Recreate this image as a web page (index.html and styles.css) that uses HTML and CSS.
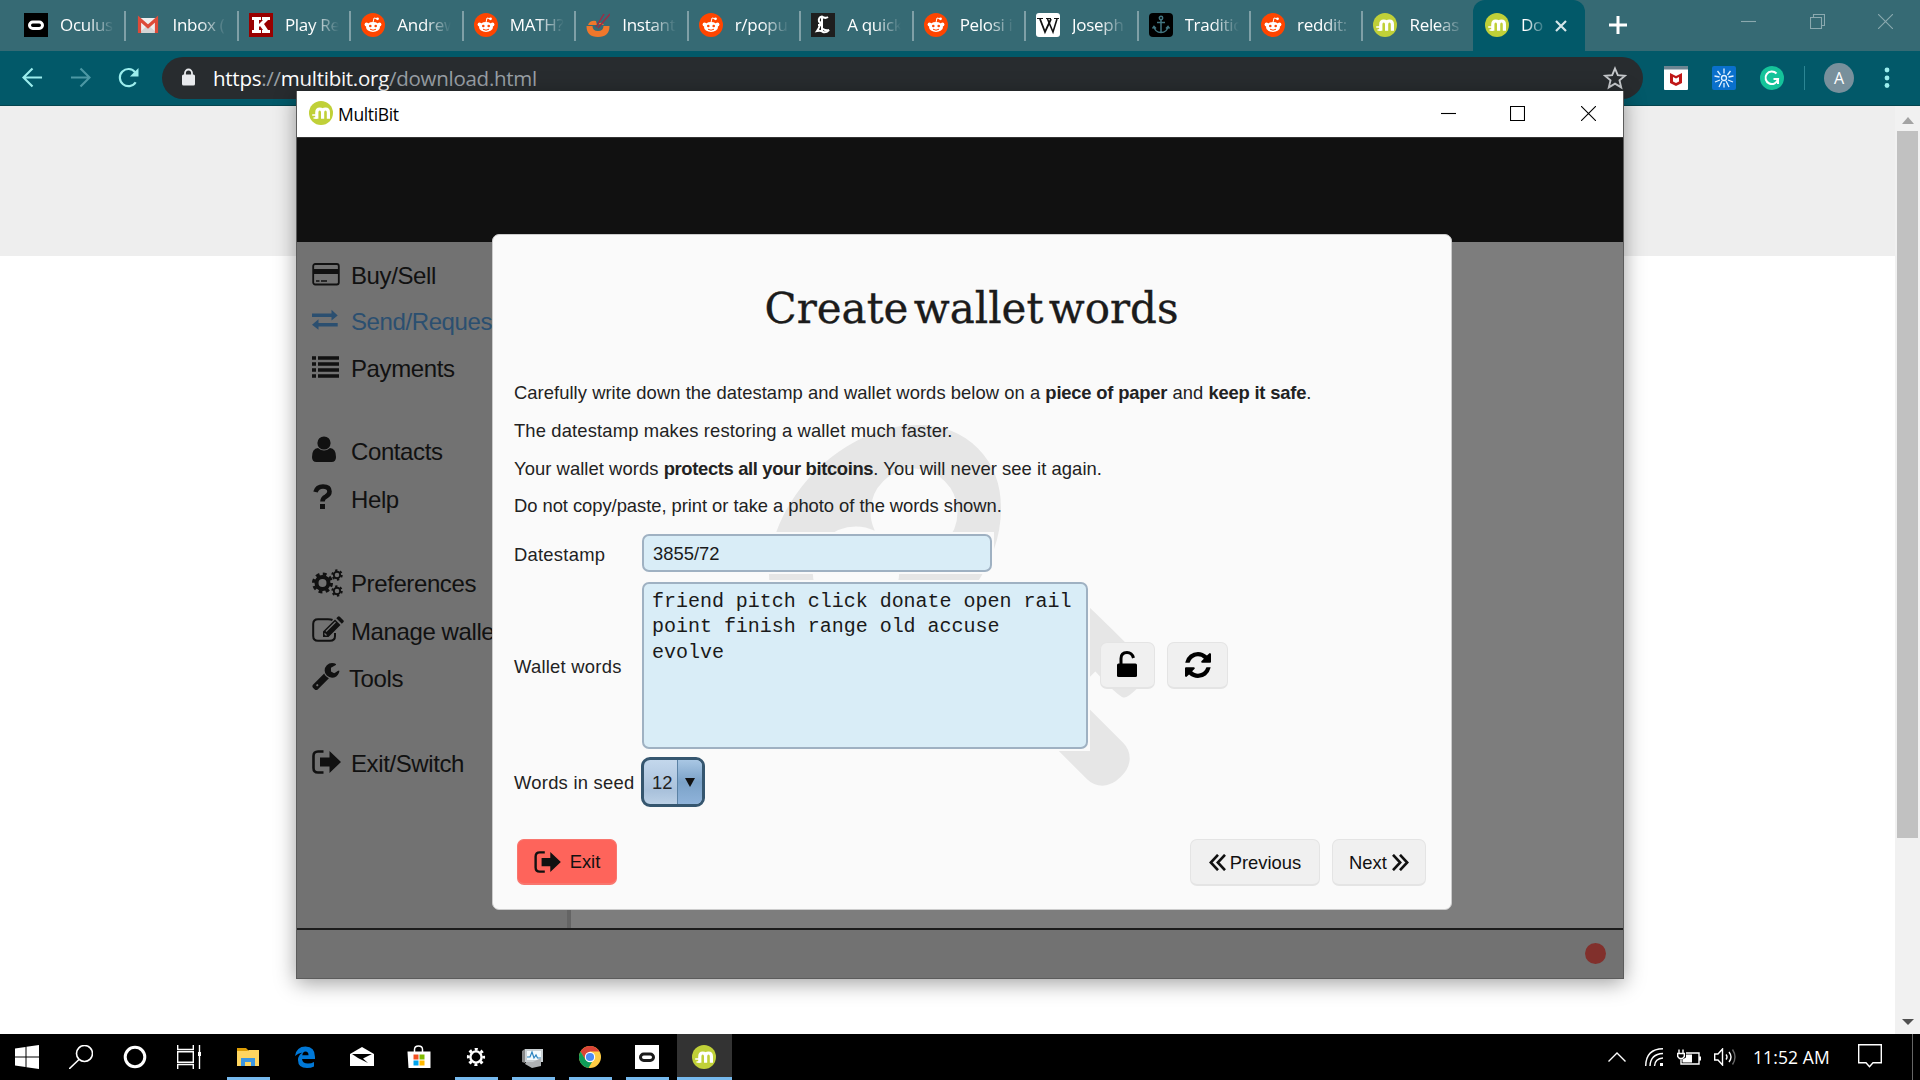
FILE: index.html
```html
<!DOCTYPE html>
<html lang="en">
<head>
<meta charset="utf-8">
<title>MultiBit</title>
<link rel="stylesheet" href="styles.css">
</head>
<body>
<svg class="defs" width="0" height="0">
  <symbol id="reddit" viewBox="0 0 24 24"><circle cx="12" cy="12" r="12" fill="#ff4500"/><g fill="#fff"><ellipse cx="12" cy="14" rx="7" ry="5"/><circle cx="5.500" cy="11.500" r="1.900"/><circle cx="18.500" cy="11.500" r="1.900"/><circle cx="16.500" cy="5.800" r="1.400"/></g><path d="M12 9.500l1-4.500 3.500.8" fill="none" stroke="#fff" stroke-width="1"/><circle cx="9.300" cy="13" r="1.300" fill="#ff4500"/><circle cx="14.700" cy="13" r="1.300" fill="#ff4500"/><path d="M9 16.200q3 2 6 0" fill="none" stroke="#ff4500"/></symbol>
  <symbol id="multibit" viewBox="0 0 24 24"><circle cx="12" cy="12" r="12" fill="#c0d038"/><path d="M7.800 17.800v-6.300Q7.800 8 10.700 8t2.900 3.500v6.300M13.600 11.500Q13.600 8 16.500 8t2.900 3.500v6.300" fill="none" stroke="#fff" stroke-width="3.200"/><path d="M3.200 14h4M4.500 17H8" stroke="#fff" stroke-width="1.700"/></symbol>
  <symbol id="signout" viewBox="0 0 30 24"><path d="M11.500 1.500H6Q1.500 1.500 1.500 6v12q0 4.500 4.500 4.500h5.500" fill="none" stroke="currentColor" stroke-width="2.600"/><path d="M8 7.500h9.500V1L29 12 17.500 23v-6.500H8z" fill="currentColor"/></symbol>
  <symbol id="oculus" viewBox="0 0 24 24"><rect x="5.500" y="9" width="13" height="6.500" rx="3.250" fill="none" stroke="currentColor" stroke-width="3"/></symbol>
</svg>
<div class="desktop">
  <header class="tabstrip">
    <div class="tab"><svg class="fav black" viewBox="0 0 24 24"><use href="#oculus"/></svg><span>Oculus</span></div>
    <div class="tab"><svg class="fav" viewBox="0 0 24 24"><path d="M3 5h18v15H3z" fill="#eee"/><path d="M3 20l9-8 9 8z" fill="#d5d5d5"/><path d="M3.500 20V6L12 13.500 20.500 6v14" fill="none" stroke="#dd4b39" stroke-width="3.200"/></svg><span>Inbox (</span></div>
    <div class="tab"><svg class="fav" viewBox="0 0 24 24"><rect width="24" height="24" fill="#900"/><path d="M3 4h9v3h-2v4l4-4h-1V4h8v3h-2l-4 4 4 6h2v3h-8v-3h1l-3-4-1 1v3h2v3H3v-3h2V7H3z" fill="#fff"/></svg><span>Play Re</span></div>
    <div class="tab"><svg class="fav"><use href="#reddit"/></svg><span>Andrew</span></div>
    <div class="tab"><svg class="fav"><use href="#reddit"/></svg><span>MATH?</span></div>
    <div class="tab"><svg class="fav" viewBox="0 0 24 24"><path d="M.5 13h6q0 5 5.500 5t5.500-5h6q0 11-11.500 11T.5 13z" fill="#f0772b"/><path d="M2 12q2-5 8-4l1 4zM12 11q4-3 6 1z" fill="#f0772b"/><path d="M10 14L18 1M12 15l12-14" stroke="#a02a43" stroke-width="1.400"/></svg><span>Instant</span></div>
    <div class="tab"><svg class="fav"><use href="#reddit"/></svg><span>r/popu</span></div>
    <div class="tab"><svg class="fav" viewBox="0 0 24 24"><rect width="24" height="24" fill="#1e1e1e"/><path d="M17 4q-3 2-6-.5-4 1-3 5 2 1 1 3.500-1 3-3 6 4-1 6 1 3 1 6-2-3 1-6-1l-1-1M11 4v14M7 12h4" fill="none" stroke="#fff" stroke-width="2"/></svg><span>A quick</span></div>
    <div class="tab"><svg class="fav"><use href="#reddit"/></svg><span>Pelosi i</span></div>
    <div class="tab"><svg class="fav" viewBox="0 0 24 24"><rect width="24" height="24" rx="3" fill="#fff"/><path d="M1 5.500h6M10 5.500h5M18 5.500h5" stroke="#111"/><path d="M4 6l5 13L15 6M12 6" stroke="#111" stroke-width="1.800" fill="none"/><path d="M11.500 6L17 19l4-13" stroke="#111" stroke-width="1.600" fill="none"/></svg><span>Joseph</span></div>
    <div class="tab"><svg class="fav" viewBox="0 0 24 24"><rect width="24" height="24" rx="4" fill="#000"/><g fill="none" stroke="#427681" stroke-width="1.500"><circle cx="12" cy="5" r="1.700"/><path d="M12 7v13M8 9.500h8M5 13.500q1 6 7 6t7-6M3.500 15.500l1.500-2 2 2M17 15.500l2-2 1.500 2"/></g></svg><span>Traditio</span></div>
    <div class="tab"><svg class="fav"><use href="#reddit"/></svg><span>reddit:</span></div>
    <div class="tab last"><svg class="fav"><use href="#multibit"/></svg><span>Releas</span></div>
    <div class="tab active"><svg class="fav"><use href="#multibit"/></svg><span>Do</span><svg class="x" viewBox="0 0 12 12"><path d="M1 1l10 10M11 1L1 11" stroke="#d5e6e9" stroke-width="2.200"/></svg></div>
    <svg class="plus" viewBox="0 0 18 18"><path d="M9 0v18M0 9h18" stroke="#fff" stroke-width="3"/></svg>
    <div class="winctl dim">
      <svg viewBox="0 0 15 15"><path d="M0 7.500h15"/></svg>
      <svg viewBox="0 0 15 15"><path d="M.5 3.500h11v11H.5zM3.500 3V.5h11v11H12"/></svg>
      <svg viewBox="0 0 15 15"><path d="M0 0l15 15M15 0L0 15"/></svg>
    </div>
  </header>
  <nav class="toolbar">
    <svg class="nav" viewBox="0 0 22 22"><path d="M21 11H2M11 1.500L1.500 11l9.500 9.500"/></svg>
    <svg class="nav off" viewBox="0 0 22 22"><path d="M1 11h19M11 1.500l9.500 9.500-9.500 9.500"/></svg>
    <svg class="nav" viewBox="0 0 22 22"><path d="M18.500 16A9 9 0 1 1 18 5.500"/><path d="M21.500 1v9h-9z" fill="#9ceded" stroke="none"/></svg>
    <div class="omnibox">
      <svg class="lock" viewBox="0 0 13 17"><path d="M3 7V4.500a3.500 3.500 0 0 1 7 0V7" fill="none" stroke="#e8eaed" stroke-width="1.800"/><rect y="6" width="13" height="11" rx="1.500" fill="#e8eaed"/></svg>
      <span class="url">https<i>://</i>multibit.org<i>/download.html</i></span>
      <svg class="star" viewBox="0 0 24 24"><path d="M12 2.500l2.800 6.600 7.200.6-5.500 4.700 1.700 7L12 17.600l-6.200 3.800 1.700-7L2 9.700l7.200-.6z"/></svg>
    </div>
    <div class="exts">
      <svg viewBox="0 0 24 24"><rect width="24" height="24" rx="1" fill="#fff"/><path d="M0 0h24v3.500H0z" fill="#6c8592"/><path d="M6 7l6 3 6-3v10l-6 3-6-3z" fill="#c01818"/><path d="M9 11l3 1.500 3-1.500v4.500L12 17l-3-1.500z" fill="#fff"/></svg>
      <svg viewBox="0 0 24 24"><rect width="24" height="24" rx="2" fill="#0a70cc"/><g fill="none" stroke="#e4f2ff" stroke-width="1.300"><circle cx="12" cy="12" r="2.500"/><path d="M12 2.500v5M5.500 5l3 4M18.500 5l-3 4M2.500 10l5 1M21.500 10l-5 1M3 16l5-2M21 16l-5-2M7 21l3-6M17 21l-3-6M12 17v4.500"/></g></svg>
      <svg viewBox="0 0 24 24"><circle cx="12" cy="12" r="12" fill="#15c39a"/><path d="M16.500 7.500A6.300 6.300 0 1 0 18 13h-4.500M18 12.500v5.500" fill="none" stroke="#fff" stroke-width="2"/></svg>
    </div>
    <div class="avatar">A</div>
    <svg class="dots" viewBox="0 0 6 24"><g fill="#9ceded"><circle cx="3" cy="4" r="2.400"/><circle cx="3" cy="12" r="2.400"/><circle cx="3" cy="19.500" r="2.400"/></g></svg>
  </nav>
  <main class="page">
    <div class="page-body"><div class="banner"></div></div>
    <div class="scroll">
      <svg viewBox="0 0 12 8"><path d="M0 8l6-7 6 7z" fill="#a3a3a3"/></svg>
      <div class="thumb"></div>
      <svg viewBox="0 0 12 8"><path d="M0 1l6 6 6-6z" fill="#505050"/></svg>
    </div>
  </main>
  <footer class="taskbar">
    <div class="sys">
      <svg viewBox="0 0 24 24"><path d="M0 3.500l10.500-1.500v9.500H0zM11.500 1.800L24 0v11.500H11.500zM0 12.500h10.500V22L0 20.500zM11.500 12.500H24V24l-12.500-1.800z" fill="#fff"/></svg>
      <svg viewBox="0 0 24 24"><g fill="none" stroke="#fff" stroke-width="1.600"><circle cx="15.500" cy="8.500" r="8"/><path d="M10 14.500L0 24"/></g></svg>
      <svg viewBox="0 0 24 24"><circle cx="12" cy="12" r="9.800" fill="none" stroke="#fff" stroke-width="3"/></svg>
      <svg viewBox="0 0 24 24"><path d="M.7 0v4.500h15.600V0M.7 6.700h15.600v10.600H.7zM.7 24v-4.500h15.600V24M22.500 0v24" fill="none" stroke="#fff" stroke-width="1.400"/><path d="M21 7h3v4h-3z" fill="#fff"/></svg>
    </div>
    <div class="apps">
      <div class="app run"><svg viewBox="0 0 24 24"><path d="M1 3h9l2 2v2H1z" fill="#dd9d05"/><path d="M1 6h10l2-1h10v16H1z" fill="#ffd55f"/><path d="M5 21v-8h14v8h-4v-4H9v4z" fill="#3c96e0"/></svg></div>
      <div class="app"><svg viewBox="0 0 24 24"><path d="M2 11Q3.500 1.500 12.500 1.500 22 1.500 22 12v2H9q.5 4.500 6 4.500 3.500 0 6-1.500v4.500q-3 1.500-7 1.500-9 0-9-8 0-5 4.500-7.500Q5 8 2 11zm7.300-.8h6.200q0-3.700-3-3.700-2.700 0-3.200 3.700z" fill="#0078d7"/></svg></div>
      <div class="app"><svg viewBox="0 0 24 24"><path d="M0 9l12-7 12 7v12H0z" fill="#fff"/><path d="M2 9h20l-9 4.500 5 4.500L8 13z" fill="#000"/></svg></div>
      <div class="app"><svg viewBox="0 0 24 24"><path d="M7.500 7V4.500q0-3.500 4-3.500t4 3.500V7" fill="none" stroke="#fff" stroke-width="1.500"/><path d="M.5 6.500h23V23H1.500z" fill="#fff"/><path d="M6.500 9.500h5v5h-5z" fill="#f25022"/><path d="M12.500 9.500h5v5h-5z" fill="#7fba00"/><path d="M6.500 15.500h5v5h-5z" fill="#00a4ef"/><path d="M12.500 15.500h5v5h-5z" fill="#ffb900"/></svg></div>
      <div class="app run"><svg viewBox="0 0 24 24"><circle cx="12" cy="12" r="5.600" fill="none" stroke="#fff" stroke-width="2.400"/><circle cx="12" cy="12" r="7.700" fill="none" stroke="#fff" stroke-width="2.800" stroke-dasharray="3 3.047" stroke-dashoffset="1.500"/></svg></div>
      <div class="app run"><svg viewBox="0 0 24 24"><path d="M1 6l3-2v14l-3-1z" fill="#888"/><path d="M4 4h18v13H4z" fill="#c9cfd2"/><path d="M6 6h14v9H6z" fill="#f4fafc"/><path d="M6 12h3l2-5 2 6 2-3 1.500 3H20" fill="none" stroke="#2a83c0" stroke-width="1.200"/><path d="M9 17h3l8-4v8l-9 2-7-4 1-2z" fill="#aeb1b3"/></svg></div>
      <div class="app run"><svg viewBox="0 0 24 24"><circle cx="12" cy="12" r="11" fill="#fc4"/><path d="M2.500 6.500A11 11 0 0 1 21.500 6.500H12L7 14.500z" fill="#db4437"/><path d="M2.500 6.500l5 8.200 6.500 2.200L10.500 23A11 11 0 0 1 2.500 6.500z" fill="#0f9d58"/><circle cx="12" cy="12" r="5.200" fill="#fff"/><circle cx="12" cy="12" r="4.100" fill="#4c8bf5"/></svg></div>
      <div class="app run"><svg class="white" viewBox="0 0 24 24"><use href="#oculus"/></svg></div>
      <div class="app run current"><svg><use href="#multibit"/></svg></div>
    </div>
    <div class="tray">
      <svg class="t1" viewBox="0 0 18 10"><path d="M.5 9.500L9 1l8.500 8.500"/></svg>
      <svg class="t2" viewBox="0 0 18 18"><path d="M.7 18Q1 1 18 .8M5 18Q5.500 6 18 5.500M9.500 18Q10 10.500 18 10"/><path d="M15 15h3v3h-3z" fill="#fff" stroke="none"/></svg>
      <svg class="t3" viewBox="0 0 24 16"><path d="M9 3.500h13v11H4V10M2 0v4M6 0v4M.7 4h6.600v3L5.500 9h-3L.7 7z"/><path d="M22 7h2v4h-2zM9 5h6v8H5.500v-3L9 8z" fill="#fff" stroke="none"/></svg>
      <svg class="t4" viewBox="0 0 22 18"><path d="M.7 6v6H4l4.500 5V1L4 6zM12 6.500q2 2.500 0 5M15 4q4 5 0 10"/><path d="M18.500 1.500q5 7.500 0 15" opacity=".4"/></svg>
      <span class="clock">11:52 AM</span>
      <svg class="t5" viewBox="0 0 24 24"><path d="M.7.700h22.600v18H15l-3.500 4-3.500-4H.7z"/></svg>
      <div class="peek"></div>
    </div>
  </footer>

  <section class="window">
    <div class="titlebar">
      <svg class="fav"><use href="#multibit"/></svg><span>MultiBit</span>
      <div class="winctl">
        <svg viewBox="0 0 15 15"><path d="M0 7.500h15"/></svg>
        <svg viewBox="0 0 15 15"><path d="M.5.500h14v14H.5z"/></svg>
        <svg viewBox="0 0 15 15"><path d="M0 0l15 15M15 0L0 15"/></svg>
      </div>
    </div>
    <div class="band"></div>
    <div class="middle">
      <aside class="side">
        <ul class="g1">
          <li><svg viewBox="0 0 30 30"><rect x="1.200" y="4" width="25.600" height="20.500" rx="2" fill="none" stroke="currentColor" stroke-width="1.800"/><path d="M1 9h26v5H1z" fill="currentColor"/><path d="M4 21h3.500M9 21h6" stroke="currentColor" stroke-width="1.600"/></svg>Buy/Sell</li>
          <li class="sel"><svg viewBox="0 0 30 30"><path d="M0 7.500h19.500V3.800l6.200 5.600-6.200 5.200v-3.500H0zM25.700 17H6.500v-3.700L0 18.700l6.500 5V20.600h19.200z" fill="currentColor"/></svg>Send/Request</li>
          <li><svg viewBox="0 0 30 30"><path d="M0 5h4M6 5h21M0 11h4M6 11h21M0 17h4M6 17h21M0 23h4M6 23h21" stroke="currentColor" stroke-width="3.600"/></svg>Payments</li>
        </ul>
        <ul class="g2">
          <li><svg viewBox="0 0 30 30"><circle cx="12" cy="8" r="6.600" fill="currentColor"/><path d="M6 13q6 5 12 0 6 .5 6 9 0 5-4.500 5h-15Q0 27 0 22q0-8.500 6-9z" fill="currentColor"/></svg>Contacts</li>
          <li><svg viewBox="0 0 30 30"><path d="M3.500 9Q5 3.500 11 3.500q6.500 0 6.500 5 0 3-3.500 5-3.500 1.800-3.500 5" fill="none" stroke="currentColor" stroke-width="4.600"/><path d="M8 21h5v5H8z" fill="currentColor"/></svg>Help</li>
        </ul>
        <ul class="g3">
          <li><svg class="wide" viewBox="0 0 32 30"><g fill="none" stroke="currentColor"><circle cx="10.500" cy="15" r="6" stroke-width="4"/><circle cx="10.500" cy="15" r="9" stroke-width="3" stroke-dasharray="3.800 3.270"/><circle cx="25" cy="7" r="3.200" stroke-width="1.900"/><circle cx="25" cy="7" r="4.700" stroke-width="2" stroke-dasharray="2.300 2.620"/><circle cx="25" cy="23" r="3.200" stroke-width="1.900"/><circle cx="25" cy="23" r="4.700" stroke-width="2" stroke-dasharray="2.300 2.620"/></g></svg>Preferences</li>
          <li><svg class="wide" viewBox="0 0 32 30"><path d="M20.500 4Q19 3.200 16 3.200H6Q1.200 3.200 1.200 8v12q0 4.800 4.800 4.800h12q5 0 5-4.800v-3" fill="none" stroke="currentColor" stroke-width="2"/><path d="M11 21v-5.500L23 3.500l5.500 5.500-12 12zM24.300 2.200l1.500-1.500q1-1 2 0l3.500 3.500q1 1 0 2L29.800 7.700z" fill="currentColor"/><path d="M14 15.500L23.500 6M12.500 17.500l2 2" stroke="#727272" stroke-width="1.200"/></svg>Manage wallet</li>
          <li class="tools"><svg viewBox="64 128 1700 1700"><path fill="currentColor" d="M448 1472q0-26-19-45t-45-19-45 19-19 45 19 45 45 19 45-19 19-45zm644-420l-682 682q-37 37-90 37-52 0-91-37l-106-108q-38-36-38-90 0-53 38-91l681-681q39 98 114.500 173.500t173.500 114.500zm634-435q0 39-23 106-47 134-164.500 217.500t-258.500 83.500q-185 0-316.500-131.500t-131.500-316.500 131.500-316.500 316.500-131.500q58 0 121.500 16.500t107.500 46.500q16 11 16 28t-16 28l-293 169v224l193 107q5-3 79-48.500t135.500-81 70.500-35.500q15 0 23.500 10t8.500 25z"/></svg>Tools</li>
        </ul>
        <ul class="g4">
          <li><svg class="so"><use href="#signout"/></svg>Exit/Switch</li>
        </ul>
      </aside>
      <div class="detail"></div>
    </div>
    <div class="status"><i></i></div>

    <div class="dialog">
      <svg class="key" viewBox="0 0 1792 1792"><path fill="#e6e6e6" d="M832 512q0-80-56-136t-136-56-136 56-56 136q0 42 19 83-41-19-83-19-80 0-136 56t-56 136 56 136 136 56 136-56 56-136q0-42-19-83 41 19 83 19 80 0 136-56t56-136zm851 704q0 17-49 66t-66 49q-9 0-28.500-16t-36.500-33-38.500-40-24.500-26l-96 96 220 220q28 28 28 68 0 42-39 81t-81 39q-40 0-68-28l-671-671q-176 131-365 131-163 0-265.500-102.500t-102.500-265.500q0-160 95-313t248-248 313-95q163 0 265.500 102.500t102.500 265.500q0 189-131 365l355 355 96-96q-3-3-26-24.500t-40-38.500-33-36.500-16-28.500q0-17 49-66t66-49q13 0 23 10 6 6 46 44.500t82 79.500 86.500 86 73 78 28.500 41z"/></svg>
      <h1>Create wallet words</h1>
      <div class="notes">
        <p class="n1">Carefully write down the datestamp and wallet words below on a <b>piece of paper</b> and <b>keep it safe</b>.</p>
        <p class="n2">The datestamp makes restoring a wallet much faster.</p>
        <p class="n3">Your wallet words <b>protects all your bitcoins</b>. You will never see it again.</p>
        <p class="n4">Do not copy/paste, print or take a photo of the words shown.</p>
      </div>
      <div class="form">
        <label>Datestamp</label>
        <div class="cell"><div class="hold"><div class="input">3855/72</div></div></div>
        <label>Wallet words</label>
        <div class="cell">
          <div class="hold"><div class="area">friend pitch click donate open rail<br>point finish range old accuse<br>evolve</div></div>
          <button class="btn lockb"><svg viewBox="0 0 20 26"><path d="M4 13V7.500Q4 1.500 10 1.500q5 0 6.500 5.500" fill="none" stroke="#000" stroke-width="3"/><rect y="12.500" width="20" height="13.500" rx="1.500"/></svg></button>
          <button class="btn refb"><svg viewBox="128 128 1536 1536"><path d="M1639 1056q0 5-1 7-64 268-268 434.500t-478 166.500q-146 0-282.500-55t-243.500-157l-129 129q-19 19-45 19t-45-19-19-45v-448q0-26 19-45t45-19h448q26 0 45 19t19 45-19 45l-137 137q71 66 161 102t187 36q134 0 250-65t186-179q11-17 53-117 8-23 30-23h192q13 0 22.500 9.500t9.500 22.500zm25-800v448q0 26-19 45t-45 19h-448q-26 0-45-19t-19-45 19-45l138-138q-148-137-349-137-134 0-250 65t-186 179q-11 17-53 117-8 23-30 23h-199q-13 0-22.500-9.500t-9.500-22.500v-7q65-268 270-434.500t480-166.500q146 0 284 55.500t245 156.500l130-129q19-19 45-19t45 19 19 45z"/></svg></button>
        </div>
        <label>Words in seed</label>
        <div class="cell"><div class="combo"><span>12</span><em><svg viewBox="0 0 10 9"><path d="M0 0h10L5 9z" fill="#111"/></svg></em></div></div>
      </div>
      <div class="actions">
        <button class="btn exit"><svg><use href="#signout"/></svg>Exit</button>
        <button class="btn prev"><svg viewBox="0 0 17 17"><path d="M9 .8L1.800 8.500 9 16.200M16 .8L8.800 8.500l7.200 7.700"/></svg>Previous</button>
        <button class="btn next">Next<svg viewBox="0 0 17 17"><path d="M1 .8l7.200 7.700L1 16.200M8 .8l7.200 7.700L8 16.200"/></svg></button>
      </div>
    </div>
  </section>
</div>
</body>
</html>
```
FILE: styles.css
```css
* { box-sizing: border-box; }
body { margin: 0; font-family: "Open Sans", "Noto Sans", sans-serif; }
svg { display: block; flex: none; }
.defs { position: absolute; }
.desktop { position: relative; width: 1920px; height: 1080px; overflow: hidden; display: flex; flex-direction: column; background: #fff; }

/* browser tabs */
.tabstrip { height: 51px; flex: none; background: #366a74; display: flex; align-items: flex-start; padding-left: 13px; }
.tab { position: relative; width: 112.460px; height: 51px; display: flex; align-items: center; padding-left: 11px; flex: none; }
.tab::after { content: ""; position: absolute; right: -1px; top: 11px; width: 2px; height: 30px; background: #7fa0a7; }
.tab.last::after, .tab.active::after { display: none; }
.fav { width: 24px; height: 24px; margin-top: -1px; }
.black { background: #000; color: #fff; }
.tab span { margin-left: 12px; width: 54px; height: 30px; line-height: 27px; overflow: hidden; white-space: nowrap; color: #fff; font-size: 17px; letter-spacing: -.3px; mask-image: linear-gradient(to right, #000 50%, transparent 100%); -webkit-mask-image: linear-gradient(to right, #000 50%, transparent 100%); }
.tab.active { background: #025969; border-radius: 12px 12px 0 0; margin-left: -2px; padding-left: 12px; }
.tab.active span { width: 22px; mask-image: linear-gradient(to right, #000 20%, transparent 120%); -webkit-mask-image: linear-gradient(to right, #000 20%, transparent 120%); }
.x { width: 12px; height: 12px; margin-left: 12px; }
.plus { width: 18px; height: 18px; margin: 16px 0 0 23.500px; }
.winctl { display: flex; gap: 54.500px; margin-left: auto; }
.winctl svg { width: 15px; height: 15px; fill: none; stroke: #000; stroke-width: 1.100; }
.winctl.dim { padding: 14px 27px 0 0; gap: 53.500px; }
.winctl.dim svg { stroke: #8ba9af; }

/* browser toolbar */
.toolbar { height: 55px; flex: none; background: #025969; border-bottom: 1px solid #04454f; display: flex; align-items: center; padding: 0 0 1px 22px; }
.nav { width: 21px; height: 21px; margin-right: 27px; fill: none; stroke: #9ceded; stroke-width: 2.300; }
.nav.off { stroke: #4c98a4; }
.omnibox { width: 1481px; height: 42px; margin-left: -4px; border-radius: 21px; background: #282c2f; display: flex; align-items: center; padding: 0 16px 0 20px; }
.lock { width: 13px; height: 18px; margin-top: -2px; }
.url { margin-left: 18px; font-size: 20.500px; letter-spacing: -.27px; color: #fff; line-height: 40px; }
.url i { font-style: normal; color: #9aa0a6; }
.star { width: 24px; height: 24px; margin-left: auto; fill: none; stroke: #c6c9cc; stroke-width: 1.900; }
.exts { display: flex; gap: 24px; margin-left: 21px; padding-right: 21px; }
.exts svg { width: 24px; height: 24px; }
.avatar { position: relative; margin-left: 19px; width: 30px; height: 30px; border-radius: 50%; background: #78909c; color: #fff; font-size: 16px; line-height: 30px; text-align: center; }
.avatar::before { content: ""; position: absolute; left: -20px; top: 3px; width: 1px; height: 24px; background: #2c8694; }
.dots { width: 6px; height: 24px; margin-left: 30px; }

/* web page */
.page { flex: 1; display: flex; }
.page-body { flex: 1; background: #fff; }
.banner { height: 150px; background: #eee; }
.scroll { width: 25px; background: #f1f1f1; display: flex; flex-direction: column; align-items: center; padding: 10px 0 8px; }
.scroll svg { width: 12px; height: 8px; }
.scroll svg:last-child { margin-top: auto; }
.thumb { width: 21px; height: 707px; margin-top: 7px; background: #c1c1c1; }

/* taskbar */
.taskbar { height: 46px; flex: none; background: #000; display: flex; }
.sys { width: 216px; display: flex; align-items: center; }
.sys svg { width: 24px; height: 24px; margin: 0 15px; }
.apps { display: flex; padding-left: 3.500px; }
.app { position: relative; width: 57px; height: 46px; display: flex; align-items: center; justify-content: center; }
.app svg { width: 24px; height: 24px; }
.app.run::after { content: ""; position: absolute; left: 7px; right: 7px; bottom: 0; height: 3px; background: #76b9ed; }
.app.current { width: 55px; margin-left: 1px; background: #333; }
.app.current::after { left: 0; right: 0; }
.white { background: #fff; color: #1a1a1a; }
.tray { margin-left: auto; display: flex; align-items: center; }
.tray svg { fill: none; stroke: #fff; stroke-width: 1.400; }
.t1 { width: 18px; height: 10px; }
.t2 { width: 18px; height: 18px; margin-left: 19px; }
.t3 { width: 24px; height: 17px; margin-left: 14px; }
.t4 { width: 22px; height: 18px; margin-left: 13px; }
.clock { width: 77px; margin-left: 17px; color: #fff; font-size: 17.500px; letter-spacing: .1px; white-space: nowrap; }
.t5 { width: 24px; height: 24px; margin-left: 28px; margin-top: -2px; }
.peek { width: 1px; height: 46px; margin: 0 7px 0 30px; background: #666; }

/* application window */
.window { position: absolute; left: 296px; top: 91px; width: 1328px; height: 888px; border: 1px solid #5c5c5c; border-top: 0; box-shadow: 0 4px 20px rgba(0,0,0,.38); display: flex; flex-direction: column; background: #727272; }
.titlebar { height: 46px; flex: none; background: #fff; display: flex; align-items: center; padding: 0 27px 0 12px; }
.titlebar .fav { margin-top: -2px; }
.titlebar span { margin-left: 5px; font-size: 17.500px; letter-spacing: -.35px; }
.titlebar .winctl { gap: 55px; margin-top: -1px; }
.titlebar .winctl svg:nth-child(2) { margin: 0 1px 0 -1px; }
.band { height: 105px; flex: none; background: #111; border-top: 1px solid #333; }
.middle { flex: 1; display: flex; }
.side { width: 274px; border-right: 4px solid #646464; padding: 11px 0 0 15px; color: #111; font: 24px/46px "Liberation Sans", Arial, sans-serif; }
.side ul { list-style: none; margin: 0 0 36.500px; padding: 0; }
.side li { display: flex; align-items: center; height: 46.300px; letter-spacing: -.4px; white-space: nowrap; }
.g2 li { height: 47.500px; }
.g3 li, .g4 li { height: 47.800px; }
.side svg { width: 30px; height: 30px; margin-right: 9px; margin-top: -2px; }
.side svg.wide { width: 32px; margin-right: 7px; }
.side svg.so { width: 30px; height: 24px; margin-top: -4px; }
.side .g2 svg { margin-top: -4px; }
.side .tools svg { width: 28px; height: 28px; margin-top: -4px; }
.side .sel { color: #2b4f70; }
.detail { flex: 1; background: #7d7d7d; }
.status { height: 50px; flex: none; background: #727272; border-top: 2px solid #1c1c1c; display: flex; align-items: center; justify-content: flex-end; padding: 0 17px 1px 0; }
.status i { width: 21px; height: 21px; border-radius: 50%; background: #81302c; }

/* wizard dialog */
.dialog { position: absolute; left: 195px; top: 143px; width: 960px; height: 676px; border-radius: 7px; border: 1px solid #ccc; background: #fafafa; color: #222; font: 18.400px/38px "Liberation Sans", Arial, sans-serif; display: flex; flex-direction: column; padding: 0 22px; }
.key { position: absolute; left: 275.700px; top: 161px; width: 406px; height: 406px; }
.dialog > *:not(.key) { position: relative; }
h1 { margin: 44px 0 0 -1px; height: 60px; text-align: center; font: 400 42px/60px "DejaVu Serif", serif; word-spacing: -8px; white-space: nowrap; color: #1b1b1b; -webkit-text-stroke: .35px #1b1b1b; }
.notes { margin: 35px 0 0 -1px; height: 152px; }
.notes p { margin: 0; height: 37.800px; line-height: 38px; white-space: nowrap; }
.n1 { letter-spacing: .045px; }
.n1 b { letter-spacing: -.2px; }
.n2 { letter-spacing: .14px; }
.n3 { letter-spacing: .06px; }
.n3 b { letter-spacing: -.35px; }
.n4 { letter-spacing: -.05px; }
.form { margin-top: 6px; display: grid; grid-template-columns: 125px 1fr; grid-template-rows: 42px 171px 51px; row-gap: 5.500px; align-items: center; }
.form label { white-space: nowrap; letter-spacing: .25px; margin: 3px 0 0 -1px; }
.cell { display: flex; align-items: center; height: 100%; }
.hold { padding: 2px; background: #fafafa; }
.input, .area { background: #d9edf7; border: 2px solid #9fb1c2; border-radius: 7px; color: #1a1a1a; padding: 0 9px; }
.input { width: 350px; height: 38px; line-height: 36px; }
.area { width: 446px; height: 167px; padding: 5px 8px; font: 20px/25.700px "Courier New", "Liberation Mono", monospace; letter-spacing: -.02px; white-space: nowrap; }
.btn { margin: 0; height: 47px; border: 1px solid #e4e4e4; border-bottom-width: 2px; border-radius: 7px; background: #f0f0f0; color: #111; font: 18.400px "Liberation Sans", Arial, sans-serif; display: flex; align-items: center; justify-content: center; padding: 1px 0 0; }
.lockb { width: 55px; margin-left: 10px; padding-right: 2px; }
.lockb svg { width: 20px; height: 26px; margin-top: -3px; }
.refb { width: 61px; margin-left: 12px; }
.refb svg { width: 26px; height: 26px; }
.combo { margin-left: 1px; margin-top: 1px; width: 64px; height: 50px; border: 3px solid #35566f; border-radius: 9px; overflow: hidden; display: flex; background: linear-gradient(#c3d7ec, #a9c1db 70%, #bbd0e6); }
.combo span { width: 33px; padding-left: 8px; line-height: 46px; }
.combo em { flex: 1; border-left: 1px solid #5b82a5; background: linear-gradient(#a9c7e4, #7ba2c8 50%, #8fb3da); display: flex; align-items: center; justify-content: center; }
.combo em svg { width: 10px; height: 9px; }
.actions { display: flex; margin-top: 32px; padding: 0 3px 0 2px; }
.actions .exit { width: 100px; height: 46px; background: #fe645b; border-color: #f9766e; gap: 8px; }
.exit svg { width: 28px; height: 22px; }
.prev { width: 130px; margin-left: auto; gap: 4px; }
.next { width: 94px; margin-left: 12px; gap: 5px; }
.prev svg, .next svg { width: 17px; height: 17px; fill: none; stroke: #111; stroke-width: 2.600; }
```
